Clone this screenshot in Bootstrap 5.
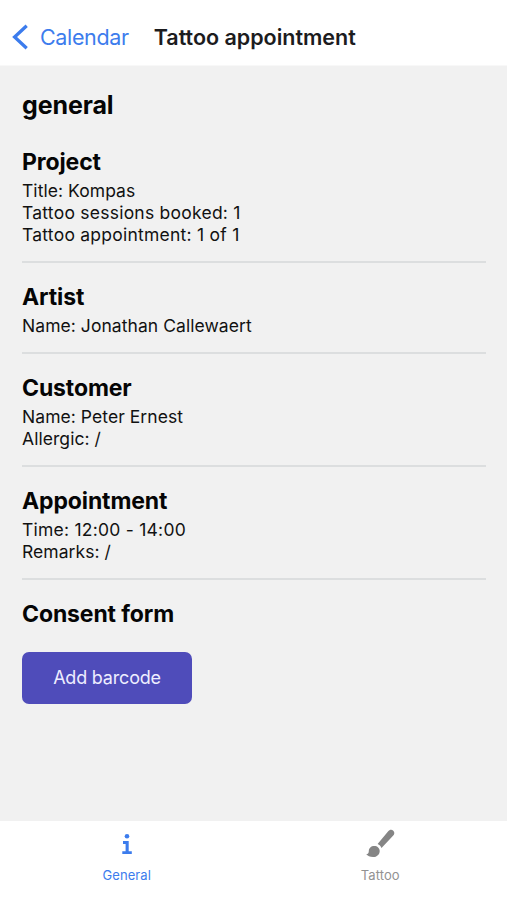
<!DOCTYPE html>
<html lang="en">
<head>
<meta charset="utf-8">
<meta name="viewport" content="width=device-width, initial-scale=1">
<title>Tattoo appointment</title>
<link href="https://cdn.jsdelivr.net/npm/bootstrap@5.3.0/dist/css/bootstrap.min.css" rel="stylesheet">
<style>
  body { font-family: Inter, "Liberation Sans", sans-serif; background: #f1f1f1; color: #111; font-size: 17.5px; line-height: 22px; letter-spacing: .06px; }
  .top-bar { height: 66px; padding: 9px 12px 0; border-bottom: 1px solid #f8f8f8; }
  .back-link { color: #3c7ced; font-size: 21.5px; letter-spacing: -.35px; }
  .back-link svg { margin-right: 11px; }
  .screen-title { font-size: 21.5px; font-weight: 600; letter-spacing: -.02px; margin-left: 25px; color: #1c1c1e; }
  .content { padding: 21px 21px 0 22px; }
  .heading { font-size: 23px; font-weight: 700; line-height: 36px; letter-spacing: -.12px; color: #050505; margin: 0; }
  .page-heading { font-size: 25px; margin-bottom: 21px; }
  .entry { border-bottom: 2px solid #dcdedf; padding-bottom: 15px; margin-bottom: 16px; }
  .numeric { letter-spacing: .24px; }
  .btn-barcode { width: 170px; height: 52px; margin-top: 20px; border-radius: 7px; background: #4f4cba; color: #eeeeff; font-size: 18px; letter-spacing: -.2px; }
  .btn-barcode span { display: block; margin-top: -2px; }
  .tab-bar { height: 79px; font-size: 13px; line-height: 16px; }
  .tab { padding-top: 7px; color: #929292; }
  .tab.active { color: #3c7ced; }
  .tab svg { margin-bottom: 7px; }
</style>
<script src="https://cdn.jsdelivr.net/npm/bootstrap@5.3.0/dist/js/bootstrap.bundle.min.js"></script>
</head>
<body class="vh-100 d-flex flex-column overflow-hidden">
<header class="top-bar bg-white d-flex align-items-center flex-shrink-0">
  <a href="#" class="back-link d-flex align-items-center text-decoration-none">
    <svg width="17" height="26" viewBox="0 0 17 26" fill="none" stroke="currentColor" stroke-width="3.3"><path d="M14.7 1.8 2.6 13l12.1 11.2"/></svg>
    <span>Calendar</span>
  </a>
  <span class="screen-title">Tattoo appointment</span>
</header>
<main class="content flex-grow-1">
  <h1 class="heading page-heading">general</h1>
  <section class="entry">
    <h2 class="heading">Project</h2>
    <div>Title: Kompas</div>
    <div class="numeric">Tattoo sessions booked: 1</div>
    <div class="numeric">Tattoo appointment: 1 of 1</div>
  </section>
  <section class="entry">
    <h2 class="heading">Artist</h2>
    <div>Name: Jonathan Callewaert</div>
  </section>
  <section class="entry">
    <h2 class="heading">Customer</h2>
    <div>Name: Peter Ernest</div>
    <div>Allergic: /</div>
  </section>
  <section class="entry">
    <h2 class="heading">Appointment</h2>
    <div class="numeric">Time: 12:00 - 14:00</div>
    <div>Remarks: /</div>
  </section>
  <section>
    <h2 class="heading">Consent form</h2>
    <button type="button" class="btn btn-barcode border-0 p-0"><span>Add barcode</span></button>
  </section>
</main>
<nav class="tab-bar bg-white d-flex flex-shrink-0 text-center">
  <a href="#" class="tab active flex-fill w-50 text-decoration-none d-flex flex-column align-items-center">
    <svg width="32" height="32" viewBox="0 0 32 32" fill="currentColor"><circle cx="16" cy="8.2" r="2.3"/><path d="M12 13h5.7v10.2h3.1v2.9h-9.5v-2.9h3.3v-7.3H12z"/></svg>
    <span>General</span>
  </a>
  <a href="#" class="tab flex-fill w-50 text-decoration-none d-flex flex-column align-items-center">
    <svg width="32" height="32" viewBox="0 0 32 32" fill="#858585"><path d="M13.6 16 24 3.4c1.7-2 3.8-2.1 5.3-.7 1.5 1.5 1.4 3.6-.5 5.4L17.5 20c-.7-1.9-2-3.2-3.9-4z"/><path d="M11.2 18c3.2 0 5.5 2.1 5.5 5 0 3.5-2.8 6.1-6.6 6.1-3.2 0-5.5-1.2-6.9-2.8 2-.1 2.6-1.4 2.6-3.3 0-2.9 2.3-5 5.4-5z" transform="translate(-1)"/></svg>
    <span>Tattoo</span>
  </a>
</nav>
</body>
</html>
